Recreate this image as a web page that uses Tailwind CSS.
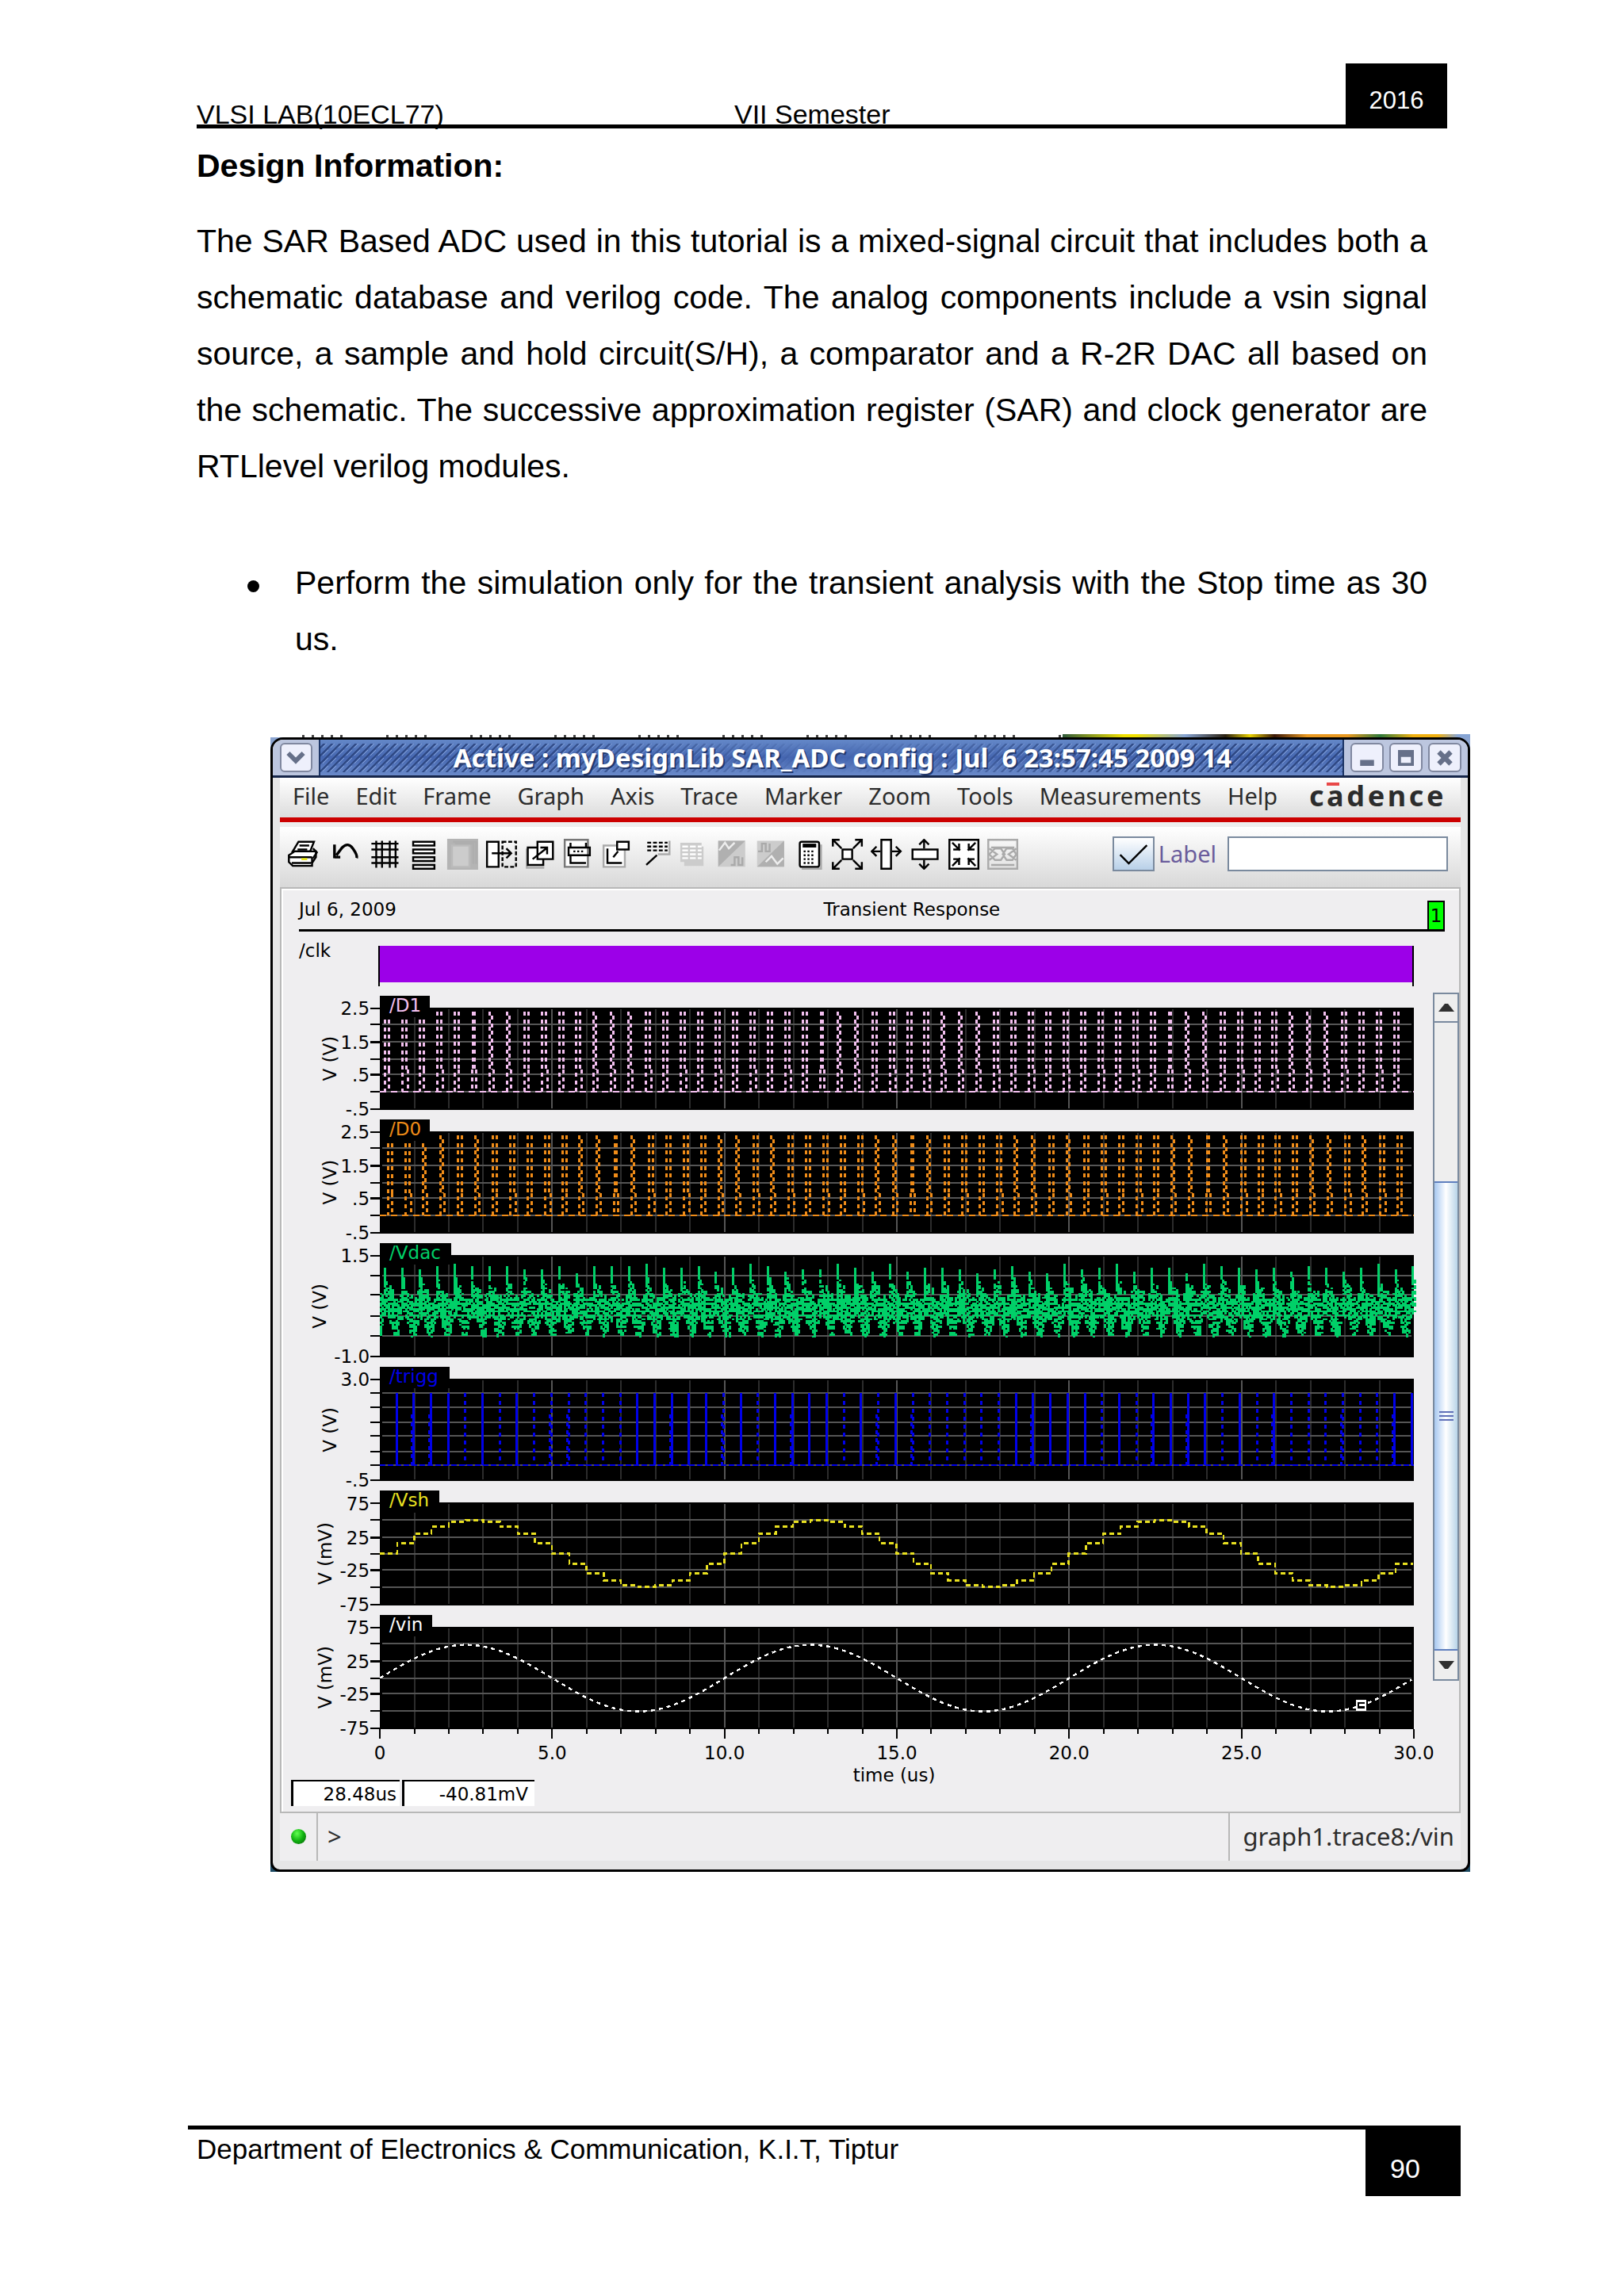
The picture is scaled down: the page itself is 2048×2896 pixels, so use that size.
<!DOCTYPE html>
<html lang="en">
<head>
  <meta charset="UTF-8">
  <title>VLSI Lab Manual - Design Information</title>
  <meta name="viewport" content="width=device-width, initial-scale=1.0">
  <script src="https://cdn.jsdelivr.net/npm/@tailwindcss/browser@4"></script>
</head>
<body class="bg-white text-black font-['Liberation_Sans',Arial,sans-serif]">

  <header class="flex pt-20 pl-[248px] pr-[223px]">
    <div class="flex-1 flex items-end border-b-[5px] border-black text-[34px] leading-none">
      <span class="w-[678px] -mb-1">VLSI LAB(10ECL77)</span>
      <span class="-mb-1">VII Semester</span>
    </div>
    <div class="w-32 h-[82px] pt-3 bg-black text-white text-[31px] flex items-center justify-center">2016</div>
  </header>

  <main>
    <section class="px-[248px] text-[41px] leading-[71px] text-justify">
      <h2 class="font-bold mt-3">Design Information:</h2>
      <p class="mt-6">The SAR Based ADC used in this tutorial is a mixed-signal circuit that includes both a schematic database and verilog code. The analog components include a vsin signal source, a sample and hold circuit(S/H), a comparator and a R-2R DAC all based on the schematic. The successive approximation register (SAR) and clock generator are RTLlevel verilog modules.</p>
      <ul class="mt-[76px] pl-16">
        <li class="flex gap-[45px]">
          <span class="mt-8 size-[15px] shrink-0 rounded-full bg-black"></span>
          <span>Perform the simulation only for the transient analysis with the Stop time as 30 us.</span>
        </li>
      </ul>
    </section>

    <figure class="mt-[84px] pl-[341px] pr-[194px] font-['Noto_Sans','DejaVu_Sans',sans-serif]">
      <!-- sliver of the desktop behind the window -->
      <div class="h-1 flex">
        <div id="sliver" class="w-[66%] flex items-end gap-[9px] pl-10 overflow-hidden"></div>
        <div class="flex-1 bg-[linear-gradient(to_right,#2f5a3a,#f0e000_15%,#f0e000_18%,#86a4d4_30%,#2a2010_40%,#e8d000_46%,#3a1808_52%,#e89820_60%,#e89820_70%,#2f7a3a_78%,#f0b010_86%,#f0b010_92%,#86a4d4_97%)]"></div>
      </div>

      <div class="bg-linear-to-b from-[#8ba4d0] to-[#1d4a63]">
      <div class="border-[3px] border-black rounded-t-2xl rounded-b-xl bg-[#e6e6e6] overflow-hidden">

        <!-- title bar -->
        <div class="flex h-12 bg-[#bcc6df] border-b-[3px] border-[#16264a]">
          <div class="w-[60px] flex items-center justify-center border-r-2 border-[#1c3566]">
            <button aria-label="Window menu" class="w-[41px] h-[37px] rounded-md bg-[#eef0fc] border-2 border-[#8088a0] flex items-center justify-center">
              <svg viewBox="0 0 10 8" class="w-6 h-5"><path d="M1 1.5 5 5.5 9 1.5" fill="none" stroke="#667089" stroke-width="2.4"/></svg>
            </button>
          </div>
          <div class="relative flex-1 pl-7 bg-linear-to-b from-[#6488c8] via-[#4566b0] to-[#6a8aca] text-white text-[33px] font-bold flex items-center justify-center">
            <svg class="absolute inset-0 w-full h-full">
              <defs>
                <pattern id="hatch" width="10" height="10" patternUnits="userSpaceOnUse"><path d="M-2 12 12 -2M-2 2 2 -2M8 12 12 8" stroke="#2d4680" stroke-width="2"/><path d="M0 13 13 0" stroke="#86a2d8" stroke-width="1"/></pattern>
                <linearGradient id="fade"><stop offset="0" stop-color="#fff"/><stop offset=".2" stop-color="#fff"/><stop offset=".5" stop-color="#000"/><stop offset=".8" stop-color="#fff"/></linearGradient>
                <mask id="fadeMask"><rect width="100%" height="100%" fill="url(#fade)"/></mask>
              </defs>
              <rect y="5" width="100%" height="36" fill="url(#hatch)" mask="url(#fadeMask)"/>
            </svg>
            <span class="relative whitespace-pre [text-shadow:2px_2px_0_#22386c]">Active : myDesignLib SAR_ADC config : Jul  6 23:57:45 2009 14</span>
          </div>
          <div class="w-[158px] flex items-center justify-center gap-[7px] border-l-2 border-[#1c3566]">
            <button aria-label="Minimize" class="w-[42px] h-[37px] rounded-md bg-[#eef0fc] border-2 border-[#8088a0] flex items-center justify-center">
              <svg viewBox="0 0 8 8" class="size-5"><path d="M.5 5h7v3h-7z" fill="#667089"/></svg>
            </button>
            <button aria-label="Maximize" class="w-[42px] h-[37px] rounded-md bg-[#eef0fc] border-2 border-[#8088a0] flex items-center justify-center">
              <svg viewBox="0 0 8 8" class="size-5"><path d="M0 0h8v8H0zM1.500 3.500v3h5v-3z" fill="#667089" fill-rule="evenodd"/></svg>
            </button>
            <button aria-label="Close" class="w-[42px] h-[37px] rounded-md bg-[#eef0fc] border-2 border-[#8088a0] flex items-center justify-center">
              <svg viewBox="0 0 8 8" class="size-5"><path d="M1 1 7 7M7 1 1 7" stroke="#667089" stroke-width="2.500"/></svg>
            </button>
          </div>
        </div>

        <div class="mx-[9px]">
          <!-- menu bar -->
          <nav class="h-[50px] pb-1 flex items-center gap-[33px] pl-4 pr-[18px] bg-linear-to-b from-white to-[#dcdcdc] text-[#2c2c2c] text-[29px]">
            <button>File</button>
            <button>Edit</button>
            <button>Frame</button>
            <button>Graph</button>
            <button>Axis</button>
            <button>Trace</button>
            <button>Marker</button>
            <button>Zoom</button>
            <button>Tools</button>
            <button>Measurements</button>
            <button>Help</button>
            <span class="ml-auto text-[36px] leading-none font-bold tracking-widest">c<span class="relative">a<span class="absolute left-0 top-2 w-4 h-1 bg-[#e84848]"></span></span>dence</span>
          </nav>
          <div class="h-[6px] bg-[#cc0000]"></div>
          <div class="h-[6px] bg-[#eeeeee]"></div>

          <!-- tool bar -->
          <div class="h-[76px] pl-[10px] pr-4 pb-2 flex items-center bg-linear-to-b from-white to-[#d8d8d8]">
            <div id="tools" class="flex gap-[5px]"></div>
            <label class="ml-auto flex items-center gap-[5px] text-[29px] text-[#6a5c9c]">
              <span class="relative flex">
                <input type="checkbox" checked class="appearance-none w-[53px] h-11 border-2 border-[#7a8a9e] bg-linear-to-b from-white to-[#b8d0e8]">
                <svg viewBox="0 0 22 18" class="absolute inset-0 w-full h-full pointer-events-none"><path d="M4 9.500 8.500 14 18 4.500" fill="none" stroke="#000" stroke-width="1"/></svg>
              </span>
              Label
            </label>
            <input type="text" aria-label="Label text" class="ml-[14px] w-[278px] h-11 bg-white border-2 border-[#7a8a9e]">
          </div>

          <!-- graph panel -->
          <div class="border-2 border-[#b8b8b8] bg-[#efeef0] shadow-[inset_2px_2px_0_#fff] font-['DejaVu_Sans','Noto_Sans',sans-serif]">
            <div class="ml-[22px] mr-[18px] h-[54px] flex items-end justify-between border-b-[3px] border-black text-[23px]">
              <span class="mb-2">Jul 6, 2009</span>
              <span class="mb-2">Transient Response</span>
              <span class="w-[22px] h-9 bg-[#00ff00] border-2 border-b-0 border-black flex items-center justify-center">1</span>
            </div>
            <div class="flex">
              <svg id="graph" viewBox="0 0 1451 1069" class="flex-1 min-w-0 overflow-visible" font-size="23" shape-rendering="crispEdges"></svg>
              <div class="w-[33px] mt-[77px] mb-[125px] flex flex-col border-2 border-[#7a8a9e] bg-[#eeeeee]">
                <button aria-label="Scroll up" class="h-9 border-b-2 border-[#7a8a9e] flex items-center justify-center"><svg viewBox="0 0 20 10" class="w-5 h-[10px]"><path d="M0 10 8 0h4l8 10z" fill="#303030"/></svg></button>
                <div class="h-[200px]"></div>
                <div class="flex-1 border-y-2 border-[#5f7fbe] bg-linear-to-r from-[#a8c8f0] via-white to-[#b8d4e8] flex flex-col items-center justify-center gap-[3px]">
                  <span class="w-[18px] h-[2px] bg-[#6070b8]"></span>
                  <span class="w-[18px] h-[2px] bg-[#6070b8]"></span>
                  <span class="w-[18px] h-[2px] bg-[#6070b8]"></span>
                </div>
                <button aria-label="Scroll down" class="h-9 flex items-center justify-center"><svg viewBox="0 0 20 10" class="w-5 h-[10px]"><path d="M0 0 8 10h4l8-10z" fill="#303030"/></svg></button>
              </div>
            </div>
            <div class="flex gap-[3px] ml-3 mb-[7px] text-[23px] leading-8 text-right">
              <output class="w-[137px] h-[33px] pr-1 bg-white border-t-2 border-l-[3px] border-black">28.48us</output>
              <output class="w-[167px] h-[33px] pr-2 bg-white border-t-2 border-l-[3px] border-black">-40.81mV</output>
            </div>
          </div>

          <!-- status bar -->
          <div class="h-[60px] flex items-center bg-[#efeef0] text-[31px] text-[#2c2c2c]">
            <div class="w-12 h-full flex items-center justify-center border-r-2 border-[#b8b8b8]">
              <span class="size-[19px] rounded-full bg-radial-[at_40%_30%] from-[#60ff50] via-[#10b010] to-[#0a5a0a]"></span>
            </div>
            <span class="ml-3">&gt;</span>
            <div class="ml-auto h-full pl-4 pr-2 flex items-center border-l-2 border-[#b8b8b8]">graph1.trace8:/vin</div>
          </div>
          <div class="h-[11px]"></div>
        </div>
      </div>
      </div>
    </figure>
  </main>

  <footer class="mt-[320px] mb-[126px] pl-[237px] pr-[206px]">
    <div class="flex border-t-[5px] border-black">
      <div class="flex-1 pl-[11px] pt-[6px] text-[35px] leading-[38px]">Department of Electronics &amp; Communication, K.I.T, Tiptur</div>
      <div class="w-[120px] h-[84px] pr-5 pt-4 bg-black text-white text-[34px] flex items-center justify-center">90</div>
    </div>
  </footer>

  <script>
    // Toolbar icons, drawn on an 18x16 pixel grid. K = black stroke, W = white shape, G = grey stroke
    const K = 'fill="none" stroke="#000"';
    const W = 'fill="#fff" stroke="#000"';
    const G = 'fill="none" stroke="#aaa"';
    const icons = {
      "Print": `<path d="M5.500 1.500h8l-2 5h-9z" ${W}/><path d="M6 3.500h5M5 5.500h5" ${K}/><path d="M.5 8.500l3-2h11v3l-2 3v1.500h-10l-2-2z" ${W}/><path d="M.5 9.500h12M2 12.500h10M13 5l2 2-2 3M12.500 9.500v3" ${K}/><path d="M7 10.500h3" stroke="#e8e800"/>`,
      "Undo": `<path d="M4 3v7M4 9.500h3M5 8.500 8 4.500Q11 1.500 13.500 5T15.500 10" fill="none" stroke="#000" stroke-width="1.400"/>`,
      "Grid": `<path d="M5.500 1v14M8.500 1v14M12.500 1v14M15.500 1v14M3 2.500h14M3 5.500h14M3 9.500h14M3 12.500h14" ${K}/>`,
      "Strips": `<path d="M4.500 1.500h11v2h-11zM4.500 5.500h11v2h-11zM4.500 9.500h11v2h-11zM4.500 13.500h11v2h-11z" ${W}/>`,
      "Layers": `<path d="M2 0h16v16H2z" fill="#b4b4b4"/><path d="M4.500 3.500h9v11h-9z" fill="#ccc" stroke="#bbb"/><path d="M6 2.500h9.500V13M5 1.500h12V13" ${G} stroke-opacity=".6"/>`,
      "Move": `<path d="M2.500 1.500h6v13h-6z" ${W}/><path d="M10.500 1.500h7v13h-7z" ${K} stroke-dasharray="2 1"/><path d="M5 7.500h10M12.500 5l2.500 2.500-2.500 2.500" ${K}/>`,
      "Copy": `<path d="M3 5v10h9" ${G}/><path d="M3.500 4.500h8v9h-8z" ${W}/><path d="M8.500 1.500h8v9h-8z" ${W}/><path d="M6 10.500 13 5M10 4.500h3.500V8" ${K}/>`,
      "Strip chart": `<path d="M2.500.5h12v14h-12z" fill="#fff" stroke="#777"/><path d="M5.500 2v2M5.500 9v3.500h8M13.500 2v2M4.500 4.500h11v4h-11z" ${K}/><path d="M7 6.500h6" ${K} stroke-dasharray="1 1"/>`,
      "New window": `<path d="M2.500 3.500h11v11h-11z" fill="#fff" stroke="#aaa"/><path d="M4.500 5v7.500H12M7.500 9.500 10 6.500" ${K}/><path d="M9.500 1.500h6v4h-6z" ${W}/>`,
      "Annotate": `<path d="M16.500 1v7h-6" ${G}/><path d="M5 2h10.500M5 4h10.500M5 6h10.500" ${K} stroke-dasharray="2 1"/><path d="M4.500 13.500 10 8.500" ${K}/>`,
      "Table": `<path d="M2 2h11v2h1v10H4v-2H2z" fill="#ccc"/><path d="M3 4h10M3 6h10M3 8h10M3 10h10" stroke="#fff" stroke-dasharray="3 1"/>`,
      "Analog": `<path d="M1.500 1h14v13.500h-14z" fill="#ccc"/><path d="M1.500 14.500 15.500 1H1.500z" fill="#b0b0b0"/><path d="M2 6l3-4 2 3 3-3" stroke="#eee" fill="none"/><path d="M8 13.500h2v-4h2v4h2v-4" ${G}/>`,
      "Digital": `<path d="M1.500 1h14v13.500h-14z" fill="#ccc"/><path d="M1.500 14.500 15.500 1v13.500z" fill="#b0b0b0"/><path d="M2 6.500h2v-4h2v4h2v-4" ${G}/><path d="M6 12l3-3 3 4 3-3" stroke="#eee" fill="none"/>`,
      "Calculator": `<path d="M14.500 3v12.500h-10" ${G}/><rect x="3.500" y="1.500" width="10" height="13" rx="1" ${W}/><path d="M5 3.500h7" stroke="#000" stroke-width="2"/><path d="M5.500 6.500h6M5.500 8.500h6M5.500 10.500h6M5.500 12.500h6" ${K} stroke-dasharray="1 1"/>`,
      "Fit": `<path d="M5.500 5.500h5v5h-5z" ${W}/><path d="M.5 4V.5H4M12 .5h3.500V4M.5 12v3.500H4M12 15.500h3.500V12M1 1l4 4M15 1l-4 4M1 15l4-4M15 15l-4-4" ${K}/>`,
      "Fit X": `<path d="M5.500.5h5v15h-5z" ${W}/><path d="M5 6.500H.5M3 4 .5 6.500 3 9M11 6.500h4.500M13 4l2.500 2.500L13 9" ${K}/>`,
      "Fit Y": `<path d="M1.500 5.500h13v5h-13z" ${W}/><path d="M7.500 5V.5M5 3 7.500.5 10 3M7.500 11v4.500M5 13l2.500 2.500L10 13" ${K}/>`,
      "Zoom in": `<path d="M.5.5h15v15H.5z" ${W}/><path d="M2 2l4 4M5.500 2.500v3h-3M14 2l-4 4M10.500 2.500v3h3M2 14l4-4M5.500 13.500v-3h-3M14 14l-4-4M10.500 13.500v-3h3" ${K}/>`,
      "Eye": `<path d="M.5.5h15v15H.5z" ${G}/><path d="M1 8l3-3h3l2 3-2 3H4zM8 8l2-3h3l2 3-2 3h-3zM1 5l4 3-4 3M15 5l-4 3 4 3M2 4.500h12M2 13.500h12" ${G}/>`,
    };
    document.getElementById("tools").innerHTML = Object.entries(icons).map(([name, body]) =>
      `<button title="${name}"><svg viewBox="0 0 18 16" class="w-11 h-[39px]">${body}</svg></button>`).join("");

    // Lower edges of the text in the window behind
    document.getElementById("sliver").innerHTML = Array.from({ length: 82 }, (_, i) =>
      `<i class="h-[3px] shrink-0 bg-[#444]" style="width:${i % 7 > 4 ? 14 : 3}px;opacity:${i % 7 > 4 ? 0 : 1}"></i>`).join("");

    // Plot geometry
    const X0 = 124, PW = 1303, US = PW / 30, PX = 2.44, PH = 129;
    let seed = 7;
    const rand = () => (seed = (seed * 16807) % 2147483647) / 2147483647;

    const text = (x, y, s, anchor = "end", color = "#000") =>
      `<text x="${x}" y="${y}" text-anchor="${anchor}" fill="${color}">${s}</text>`;
    const line = (x1, y1, x2, y2, color, w = 2, dash = "") =>
      `<path d="M${x1} ${y1}L${x2} ${y2}" stroke="${color}" stroke-width="${w}" stroke-dasharray="${dash}"/>`;

    const DASH = "5 4.6";
    const pulses = (top, color, start, shapes) => {
      const base = top + 106;
      let s = line(X0, base, X0 + PW, base, color, 2, "8 6");
      for (let i = 0; i < 59; i++) {
        const x = Math.round(X0 + start + i * 21.95);
        const t = top + (i < 3 ? 15 : 5);
        const shape = shapes[i % shapes.length];
        const knee = top + 78;
        if (shape === "m") {
          s += line(x + 2, t, x + 2, knee, color, 5, DASH);
          s += line(x, knee, x, base, color, 3, DASH) + line(x + 5, knee, x + 5, base, color, 3, DASH);
        } else if (shape === "z") {
          s += line(x, t, x, base, color, 3, DASH) + line(x + 3, t + 5, x + 3, knee, color, 3, DASH);
          s += line(x + 5, knee, x + 5, base, color, 3, DASH);
        } else {
          const foot = x + (i % 2 ? 7 : 5);
          s += line(x, t, x, base, color, 3, DASH) + line(x + 5, t, x + 5, knee, color, 3, DASH);
          s += line(foot, knee, foot, base, color, 3, DASH);
        }
      }
      return s;
    };

    const vdac = (top, color) => {
      let d = "", solid = 4;
      for (let c = 0; c < PW / PX; c++) {
        const phase = (c + 7) % 9;
        if (phase === 0) solid = 3 + Math.floor(rand() * 9);
        const hi = [12, 28, 34, 38, 42, 46, 50, 50, 46][phase] + rand() * 12;
        const lo = [78, 76, 82, 90, 98, 104, 104, 98, 84][phase] + rand() * 10 - 4;
        for (let y = hi; y < Math.min(lo, 103); y += PX) {
          const row = Math.round(y / PX);
          const hole = (row + Math.round(Math.sin(c / 4) * 3)) % 3 === 0 || (row % 2 === 0 && rand() < .3);
          if (phase === 0 && y > 30 && rand() < .2) continue;
          if (phase === 0 || c % 9 === solid || !hole || rand() < .25) {
            d += `M${(X0 + c * PX).toFixed(1)} ${(top + row * PX).toFixed(1)}h3`;
          }
        }
      }
      return `<path d="${d}" stroke="${color}" stroke-width="2.600"/>`;
    };

    const trigg = (top, color) => {
      let s = line(X0, top + 109, X0 + PW, top + 109, color, 2, "7 3");
      for (let i = 0; i < 60; i++) {
        const x = Math.round(X0 + 20.500 + i * 21.7);
        const solid = "1111010100000011111010"[i % 22] === "1";
        s += line(x, top + 18, x, top + 109, color, 3, solid ? "" : "5 5");
        if (i % 9 === 1 || i % 7 === 2) s += line(x - 2, top + 45, x - 2, top + 109, color, 3, "5 5");
      }
      return s;
    };

    const vsh = (top, color) => {
      let d = "";
      for (let k = 0; k < 60; k++) {
        const y = Math.round(top + 64 - Math.sin(k * Math.PI / 10) * 42);
        d += `${k ? "L" : "M"}${X0 + k * 21.7} ${y}H${X0 + (k + 1) * 21.7}`;
      }
      return `<path d="${d}" fill="none" stroke="${color}" stroke-width="2.400" stroke-dasharray="6 4"/>`;
    };

    const vin = (top, color) => {
      let d = "";
      for (let x = 0; x <= PW; x += 4) d += `${x ? "L" : "M"}${X0 + x} ${(top + 65 - Math.sin(x / US * Math.PI / 5) * 42).toFixed(1)}`;
      return `<path d="${d}" fill="none" stroke="${color}" stroke-width="2.400" stroke-dasharray="5 5"/>
        <path d="M1355 ${top + 94}h11v11h-11zM1358 ${top + 99}h8" fill="none" stroke="${color}" stroke-width="2.400"/>`;
    };

    const plots = [
      { name: "/D1", w: 63, color: "#f4c0f0", unit: "V (V)", ux: 69, grid: [21, 43, 65, 84, 106], labels: [[0, "2.5"], [43, "1.5"], [84, ".5"], [127, "-.5"]], draw: (t, c) => pulses(t, c, 6, "pppppmzzppppzzzppppp") },
      { name: "/D0", w: 63, color: "#f08c18", unit: "V (V)", ux: 69, grid: [21, 43, 65, 84, 106], labels: [[0, "2.5"], [43, "1.5"], [84, ".5"], [127, "-.5"]], draw: (t, c) => pulses(t, c, 10, "ppzzpzpppppzzmzpp") },
      { name: "/Vdac", w: 90, color: "#00d068", unit: "V (V)", ux: 56, grid: [26, 50, 77, 102], labels: [[0, "1.5"], [127, "-1.0"]], draw: vdac },
      { name: "/trigg", w: 88, color: "#0000e8", unit: "V (V)", ux: 69, grid: [18, 36, 55, 72, 92, 109], labels: [[0, "3.0"], [127, "-.5"]], draw: trigg },
      { name: "/Vsh", w: 75, color: "#e8e020", unit: "V (mV)", ux: 63, grid: [21, 43, 64, 84, 106], labels: [[0, "75"], [43, "25"], [84, "-25"], [127, "-75"]], draw: vsh },
      { name: "/vin", w: 66, color: "#ffffff", unit: "V (mV)", ux: 63, grid: [21, 43, 65, 84, 106], labels: [[0, "75"], [43, "25"], [84, "-25"], [127, "-75"]], draw: vin },
    ];

    // Digital clock strip
    let out = text(22, 32, "/clk", "start");
    out += `<rect x="${X0}" y="18" width="${PW}" height="46" fill="#9c00e8"/>`;
    out += line(123, 18, 123, 69, "#000") + line(X0 + PW - 1, 18, X0 + PW - 1, 69, "#000");

    plots.forEach((p, i) => {
      const top = 96 + i * 156;
      out += `<rect x="${X0}" y="${top}" width="${PW}" height="${PH}"/>`;
      for (let u = 1; u < 30; u++) out += line(X0 + u * US, top + 2, X0 + u * US, top + PH - 2, u % 5 ? "#2c2c2c" : "#555");
      p.grid.forEach(g => {
        out += line(X0 + 3, top + g, X0 + PW - 3, top + g, "#555");
        out += line(X0 - 12, top + g, X0, top + g, "#000");
      });
      p.labels.forEach(([y, s]) => {
        out += line(X0 - 12, top + y + 1, X0, top + y + 1, "#000");
        out += text(X0 - 13, top + y + 9, s);
      });
      out += p.draw(top, p.color);
      out += `<rect x="${X0}" y="${top - 15}" width="${p.w}" height="27"/>`;
      out += text(X0 + 12, top + 5, p.name, "start", p.color);
      out += `<text transform="translate(${p.ux} ${top + 64}) rotate(-90)" text-anchor="middle">${p.unit}</text>`;
    });

    // Time axis
    for (let u = 0; u <= 30; u++) {
      out += line(X0 + u * US, 1005, X0 + u * US, u % 5 ? 1011 : 1017, "#000");
      if (u % 5 === 0) out += text(X0 + u * US, 1043, u ? u.toFixed(1) : "0", "middle");
    }
    out += text(772, 1071, "time (us)", "middle");
    document.getElementById("graph").innerHTML = out;
  </script>
</body>
</html>
